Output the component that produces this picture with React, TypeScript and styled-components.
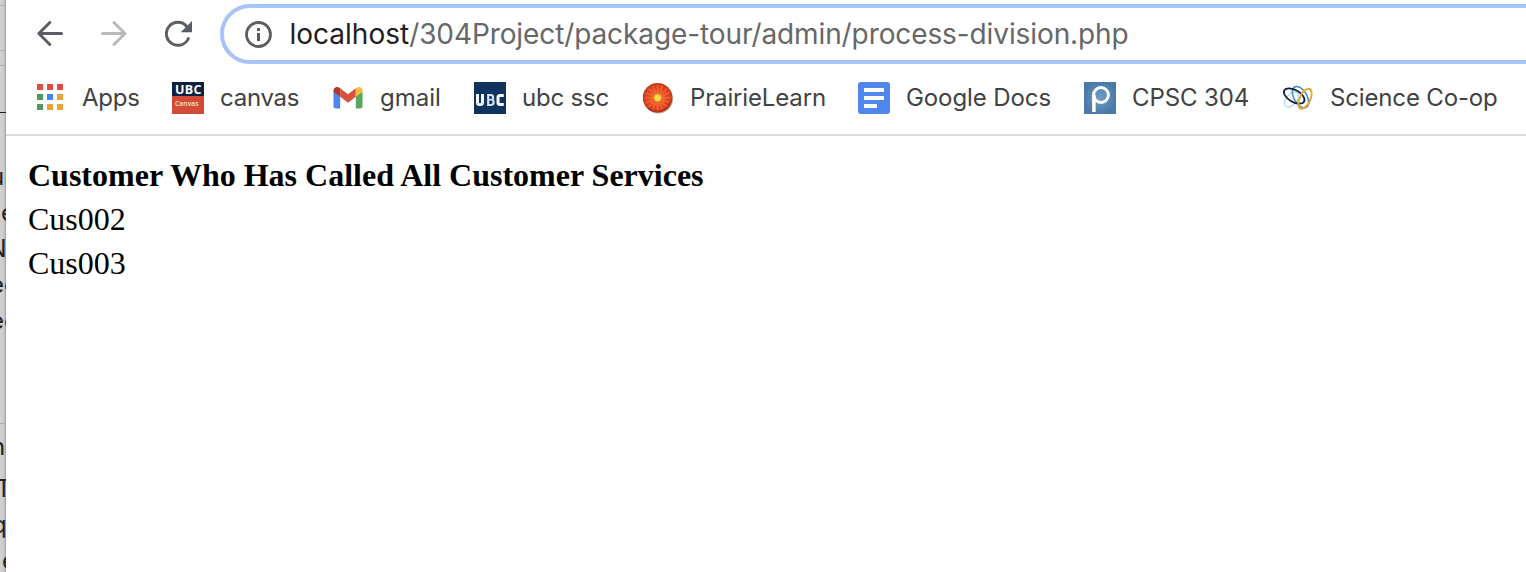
import React from 'react';
import styled, { createGlobalStyle } from 'styled-components';

const GlobalStyle = createGlobalStyle`
  html, body { margin: 0; padding: 0; background: #fff; overflow: hidden; }
  * { box-sizing: border-box; }
`;

const Screen = styled.div`
  display: flex;
  width: 1526px;
  height: 572px;
  overflow: hidden;
  background: #fff;
`;

const Behind = styled.aside`
  flex: 0 0 6px;
  height: 572px;
  overflow: hidden;
  background: linear-gradient(to right, #d2d2d2, #cbcbcb 60%, #b8b8b8 84%, #959595);
  font: 24px/36px Inter, sans-serif;
  color: #222;
`;

const Gap = styled.div<{ $h: number }>`
  height: ${(p) => p.$h}px;
`;

const Rule = styled.div<{ $dark?: boolean }>`
  height: 1px;
  background: ${(p) => (p.$dark ? '#1d1d1d' : '#adadad')};
`;

const Snippet = styled.div<{ $shift: number; $h?: number }>`
  height: ${(p) => p.$h ?? 36}px;
  margin-left: ${(p) => p.$shift}px;
  white-space: nowrap;
`;

const Browser = styled.main`
  flex: 0 0 1520px;
  display: flex;
  flex-direction: column;
  overflow: hidden;
`;

const Toolbar = styled.header`
  display: flex;
  height: 68px;
  padding: 4px 0 4px 28px;
`;

const NavButton = styled.span`
  flex: 0 0 32px;
  height: 60px;
  margin-right: 32px;
  svg { display: block; margin-top: 14px; }
`;

const AddressBar = styled.div`
  flex: 0 0 1340px;
  display: flex;
  align-items: center;
  height: 60px;
  margin-left: -6px;
  padding-left: 18px;
  border: 4px solid #a6c4f7;
  border-radius: 30px;
`;

const Url = styled.span`
  margin-left: 13.5px;
  font: 28px/40px Inter, sans-serif;
  letter-spacing: -0.1px;
  color: #666769;
  white-space: nowrap;
`;

const Host = styled.span`
  color: #1f2023;
  letter-spacing: 0;
`;

const Bookmarks = styled.nav`
  display: flex;
  align-items: center;
  height: 68px;
  padding: 0 0 6px 28px;
  border-bottom: 2px solid #dadbdf;
`;

const Bookmark = styled.div<{ $w: number }>`
  flex: 0 0 ${(p) => p.$w}px;
  display: flex;
  align-items: center;
  gap: 16px;
  svg { flex: none; display: block; }
`;

const Label = styled.span<{ $track: number }>`
  font: 24px/32px Inter, sans-serif;
  letter-spacing: ${(p) => p.$track}px;
  color: #404245;
  white-space: nowrap;
`;

const Page = styled.section`
  padding: 17px 22px;
  font: 32px/44px 'Liberation Serif', serif;
  color: #000;
`;

const Heading = styled.div`
  font-weight: 700;
`;

const Line = styled.div``;

const Icon = ({ children }: { children: React.ReactNode }) => (
  <svg width="32" height="32" viewBox="0 0 32 32">{children}</svg>
);

const AppsIcon = () => {
  const colors = ['#e6493d', '#e6493d', '#e6493d', '#51995a', '#4187f0', '#e6a438', '#51995a', '#e6a438', '#e6a438'];
  return (
    <Icon>
      {colors.map((c, i) => (
        <rect key={i} x={1 + (i % 3) * 10} y={2 + Math.floor(i / 3) * 10} transform="translate(2 0)" width="6" height="6" fill={c} />
      ))}
    </Icon>
  );
};

const CanvasIcon = () => (
  <Icon>
    <rect width="32" height="32" fill="#d44a39" />
    <rect width="32" height="14" fill="#0c2044" />
    <text x="3" y="11.6" fontFamily="Open Sans, sans-serif" fontWeight="700" fontSize="12.5" textLength="26.5" fill="#fff">UBC</text>
    <text x="3" y="24" fontFamily="Open Sans, sans-serif" fontWeight="600" fontSize="6.6" textLength="23.5" fill="#fbe3de">Canvas</text>
  </Icon>
);

const GmailIcon = () => (
  <Icon>
    <path d="M1.5 9.5 8.2 14v12.5H4a2.5 2.5 0 0 1-2.5-2.5z" fill="#4f86ec" />
    <path d="M30.5 9.5 23.8 14v12.5H28a2.5 2.5 0 0 0 2.5-2.5z" fill="#58a55c" />
    <path d="M8.2 6.3 16 12.2l7.8-5.9v8.5L16 20.7l-7.8-5.9z" fill="#d95140" />
    <path d="M1.5 8.5c0-3.2 3.2-4.4 5.6-3.1l1.1.9v8.5L1.5 10z" fill="#b33629" />
    <path d="M30.5 8.5c0-3.2-3.2-4.4-5.6-3.1l-1.1.9v8.5l6.7-4.8z" fill="#f1bd42" />
  </Icon>
);

const UbcIcon = () => (
  <Icon>
    <rect width="32" height="32" fill="#10325f" />
    <g fill="none" stroke="#f4f7fb" strokeWidth="3">
      <path d="M3.5 12v8.5q0 2 2 2h1q2 0 2-2V12" />
      <path d="M29.8 13.5H26q-2 0-2 2v5q0 2 2 2h3.8" />
    </g>
    <path d="M14.2 13h2.3q2.6 0 2.6 2.3 0 2.2-1.3 2.2 1.8.3 1.8 2.8 0 2.7-2.8 2.7h-2.6z" fill="none" stroke="#d6e1ee" strokeWidth="2.2" />
    <path d="M14 17.7h4" stroke="#dce6f2" strokeWidth="1.5" />
  </Icon>
);

const FlowerIcon = () => (
  <Icon>
    <defs>
      <radialGradient id="petals">
        <stop offset="0" stopColor="#f57a2c" />
        <stop offset=".55" stopColor="#ee5426" />
        <stop offset=".85" stopColor="#dd451f" />
        <stop offset="1" stopColor="#b8391c" />
      </radialGradient>
      <radialGradient id="pollen">
        <stop offset="0" stopColor="#f7ee55" />
        <stop offset=".7" stopColor="#efc93a" />
        <stop offset="1" stopColor="#df8a26" />
      </radialGradient>
    </defs>
    <circle cx="16.4" cy="17" r="14.6" fill="#8c5b50" opacity=".5" />
    <circle cx="15.6" cy="15.8" r="14.8" fill="url(#petals)" />
    {Array.from({ length: 16 }, (_, i) => (
      <g key={i} transform={`rotate(${i * 22.5} 15.6 15.8)`}>
        <path d="M17.8 2.5v6" stroke="#b83419" strokeWidth=".9" opacity=".5" />
        <path d="M15.4 3v7" stroke="#ff7a48" strokeWidth="1.2" opacity=".5" />
      </g>
    ))}
    <path d="M28.5 19a13.4 13.4 0 0 1-22 7" fill="none" stroke="#9f2b14" strokeWidth="2" opacity=".45" />
    <circle cx="15.6" cy="15.8" r="4.3" fill="url(#pollen)" />
  </Icon>
);

const DocsIcon = () => (
  <Icon>
    <rect width="32" height="32" rx="3" fill="#4f86ec" />
    <path d="M6 6h20v4H6zM6 14h20v4H6zM6 22h13v4H6z" fill="#fff" />
  </Icon>
);

const PiazzaIcon = () => (
  <Icon>
    <defs>
      <radialGradient id="piazza">
        <stop offset="0" stopColor="#6c9fc8" />
        <stop offset="1" stopColor="#4a7ba7" />
      </radialGradient>
    </defs>
    <rect width="32" height="32" fill="url(#piazza)" />
    <circle cx="17" cy="13" r="7.4" fill="none" stroke="#fff" strokeWidth="3" />
    <path d="M9.9 13v17" stroke="#fff" strokeWidth="3.6" />
  </Icon>
);

const ScienceIcon = () => (
  <Icon>
    <g fill="none">
      <ellipse cx="9.5" cy="17.5" rx="9" ry="5.2" transform="rotate(-48 9.5 17.5)" stroke="#b4def0" strokeWidth="1.5" />
      <ellipse cx="18.5" cy="15.2" rx="11.8" ry="6.5" transform="rotate(60 18.5 15.2)" stroke="#4689c4" strokeWidth="1.5" />
      <ellipse cx="12.2" cy="14" rx="11.4" ry="6" transform="rotate(30 12.2 14)" stroke="#111d3b" strokeWidth="1.8" />
      <ellipse cx="23" cy="16.8" rx="10.8" ry="5.3" transform="rotate(-65 23 16.8)" stroke="#e7a63c" strokeWidth="2" />
    </g>
  </Icon>
);

const bookmarks = [
  { label: 'Apps', w: 138, track: -0.2, icon: <AppsIcon /> },
  { label: 'canvas', w: 160, track: -0.25, icon: <CanvasIcon /> },
  { label: 'gmail', w: 142, track: 0, icon: <GmailIcon /> },
  { label: 'ubc ssc', w: 168, track: -0.2, icon: <UbcIcon /> },
  { label: 'PrairieLearn', w: 216, track: -0.15, icon: <FlowerIcon /> },
  { label: 'Google Docs', w: 226, track: -0.1, icon: <DocsIcon /> },
  { label: 'CPSC 304', w: 198, track: -0.1, icon: <PiazzaIcon /> },
  { label: 'Science Co-op', w: 240, track: -0.15, icon: <ScienceIcon /> },
];

export default function App() {
  return (
    <Screen>
      <GlobalStyle />
      <Behind>
        <Gap $h={5} /><Rule />
        <Gap $h={44} /><Rule />
        <Gap $h={14} /><Rule />
        <Gap $h={46} /><Rule $dark />
        <Gap $h={46} />
        <Snippet $shift={-10}>u</Snippet>
        <Snippet $shift={1}>e</Snippet>
        <Snippet $shift={-11.5}>N</Snippet>
        <Snippet $shift={-10}>ec</Snippet>
        <Snippet $shift={-10}>ec</Snippet>
        <Gap $h={84} /><Rule />
        <Gap $h={5} />
        <Snippet $shift={-9} $h={42}>n</Snippet>
        <Snippet $shift={-4}>T</Snippet>
        <Snippet $shift={-8}>q</Snippet>
        <Snippet $shift={2}>e</Snippet>
      </Behind>
      <Browser>
        <Toolbar>
          <NavButton>
            <Icon>
              <path d="M27.5 15.5H4.8M15.8 4.5 4.8 15.5l11 11" fill="none" stroke="#5b5e63" strokeWidth="3" strokeLinecap="round" strokeLinejoin="round" />
            </Icon>
          </NavButton>
          <NavButton>
            <Icon>
              <path d="M4.5 15.5h22.5M16 4.5l11 11-11 11" fill="none" stroke="#b9babc" strokeWidth="3" strokeLinecap="round" strokeLinejoin="round" />
            </Icon>
          </NavButton>
          <NavButton>
            <Icon>
              <path d="M26.4 20.5A11.5 11.5 0 1 1 24.5 8.2" fill="none" stroke="#5b5e63" strokeWidth="3" strokeLinecap="round" />
              <path d="M30 3v11.3H18.7z" fill="#5b5e63" />
            </Icon>
          </NavButton>
          <AddressBar>
            <svg width="34" height="32" viewBox="0 0 34 32">
              <circle cx="16.5" cy="16.5" r="12" fill="none" stroke="#5b5e63" strokeWidth="2.8" />
              <path d="M15 10h3v3h-3zM15 15h3v8h-3z" fill="#5b5e63" />
            </svg>
            <Url><Host>localhost</Host>/304Project/package-tour/admin/process-division.php</Url>
          </AddressBar>
        </Toolbar>
        <Bookmarks>
          {bookmarks.map((b) => (
            <Bookmark key={b.label} $w={b.w}>
              {b.icon}
              <Label $track={b.track}>{b.label}</Label>
            </Bookmark>
          ))}
        </Bookmarks>
        <Page>
          <Heading>Customer Who Has Called All Customer Services</Heading>
          <Line>Cus002</Line>
          <Line>Cus003</Line>
        </Page>
      </Browser>
    </Screen>
  );
}
